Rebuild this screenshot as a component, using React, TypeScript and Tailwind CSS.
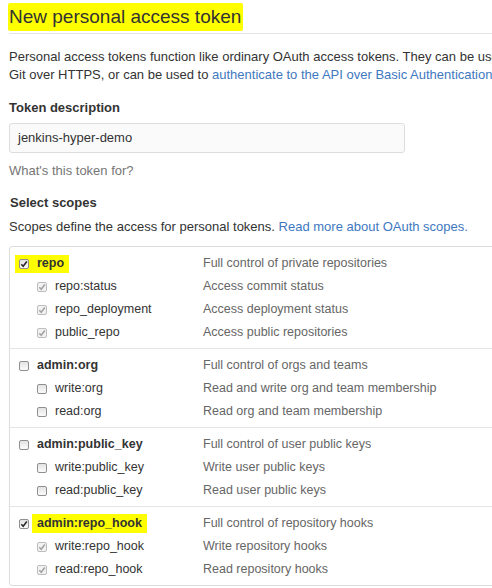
import React from 'react';

type Scope = {
  name: string;
  desc: string;
  checked?: boolean;
  mark?: 'box' | 'label';
  children: { name: string; desc: string }[];
};

const scopes: Scope[] = [
  {
    name: 'repo',
    desc: 'Full control of private repositories',
    checked: true,
    mark: 'box',
    children: [
      { name: 'repo:status', desc: 'Access commit status' },
      { name: 'repo_deployment', desc: 'Access deployment status' },
      { name: 'public_repo', desc: 'Access public repositories' },
    ],
  },
  {
    name: 'admin:org',
    desc: 'Full control of orgs and teams',
    children: [
      { name: 'write:org', desc: 'Read and write org and team membership' },
      { name: 'read:org', desc: 'Read org and team membership' },
    ],
  },
  {
    name: 'admin:public_key',
    desc: 'Full control of user public keys',
    children: [
      { name: 'write:public_key', desc: 'Write user public keys' },
      { name: 'read:public_key', desc: 'Read user public keys' },
    ],
  },
  {
    name: 'admin:repo_hook',
    desc: 'Full control of repository hooks',
    checked: true,
    mark: 'label',
    children: [
      { name: 'write:repo_hook', desc: 'Write repository hooks' },
      { name: 'read:repo_hook', desc: 'Read repository hooks' },
    ],
  },
];

const Checkbox: React.FC<{ checked?: boolean; disabled?: boolean }> = ({ checked, disabled }) => (
  <span
    className={`relative inline-block w-[10px] h-[10px] shrink-0 rounded-[2px] border ${
      disabled ? 'border-[#bdbdbd] bg-[#f2f2f2]' : 'border-[#8f8f8f] bg-linear-to-b from-[#e3e3e3] to-[#fbfbfb]'
    }`}
  >
    {checked && (
      <svg viewBox="0 0 10 10" className="absolute -left-px -top-px w-[10px] h-[10px]">
        <path
          d="M2.3 5.2 L4.2 7.2 L7.8 2.6"
          fill="none"
          stroke={disabled ? '#a3a3a3' : '#2a2a2a'}
          strokeWidth="1.6"
        />
      </svg>
    )}
  </span>
);

export default function App() {
  return (
    <div className="w-[492px] h-[588px] overflow-hidden bg-white text-[#333] font-['Liberation_Sans',Arial,sans-serif]">
      <div className="w-[780px] pl-[9px]">
        <h2 className="h-[34px] border-b border-[#e5e5e5] text-[19px] leading-[33px]">
          <span className="-ml-px pl-px pr-[2px] pt-[3px] pb-[4px] bg-[#ffff00] rounded-[2px]">
            New personal access token
          </span>
        </h2>

        <p className="mt-[14px] text-[13px] leading-[18px] whitespace-nowrap">
          Personal access tokens function like ordinary OAuth access tokens. They can be used instead of a password for
          <br />
          Git over HTTPS, or can be used to{' '}
          <a className="text-[#4078c0]">authenticate to the API over Basic Authentication</a>.
        </p>

        <div className="mt-[15px] text-[13px] leading-[18px] font-bold">Token description</div>
        <div className="mt-[6px] w-[396px] h-[30px] rounded-[3px] border border-[#dddddd] bg-[#fafafa] pl-[8px] flex items-center text-[13px]">
          jenkins-hyper-demo
        </div>
        <div className="mt-[9px] text-[13px] leading-[18px] text-[#767676]">What's this token for?</div>

        <div className="mt-[14px] pl-px text-[13px] leading-[18px] font-bold">Select scopes</div>
        <div className="text-[13px] leading-[18px] mt-[6px]">
          Scopes define the access for personal tokens.{' '}
          <a className="text-[#4078c0]">Read more about OAuth scopes.</a>
        </div>

        <div className="mt-[10px] w-[600px] border border-[#dddddd] rounded-[3px] text-[12.5px]">
          {scopes.map((s, i) => (
            <div key={s.name} className={`pt-[5px] pb-[4px] ${i > 0 ? 'border-t border-[#e5e5e5]' : ''}`}>
              <div className="flex items-center h-[23px]">
                <div className="w-[193px] pl-[9px] flex items-center">
                  {s.mark === 'box' ? (
                    <span className="-ml-[4px] pl-[4px] pr-[5px] h-[18px] flex items-center bg-[#ffff00]">
                      <Checkbox checked={s.checked} />
                      <span className="ml-[8px] font-bold">{s.name}</span>
                    </span>
                  ) : (
                    <>
                      <Checkbox checked={s.checked} />
                      {s.mark === 'label' ? (
                        <span className="ml-[3px] px-[5px] h-[19px] flex items-center font-bold bg-[#ffff00]">
                          {s.name}
                        </span>
                      ) : (
                        <span className="ml-[8px] font-bold">{s.name}</span>
                      )}
                    </>
                  )}
                </div>
                <div className="text-[#666]">{s.desc}</div>
              </div>
              {s.children.map((c) => (
                <div key={c.name} className="flex items-center h-[23px]">
                  <div className="w-[193px] pl-[27px] flex items-center">
                    <Checkbox checked={s.checked} disabled={s.checked} />
                    <span className="ml-[8px]">{c.name}</span>
                  </div>
                  <div className="text-[#666]">{c.desc}</div>
                </div>
              ))}
            </div>
          ))}
        </div>
      </div>
    </div>
  );
}
